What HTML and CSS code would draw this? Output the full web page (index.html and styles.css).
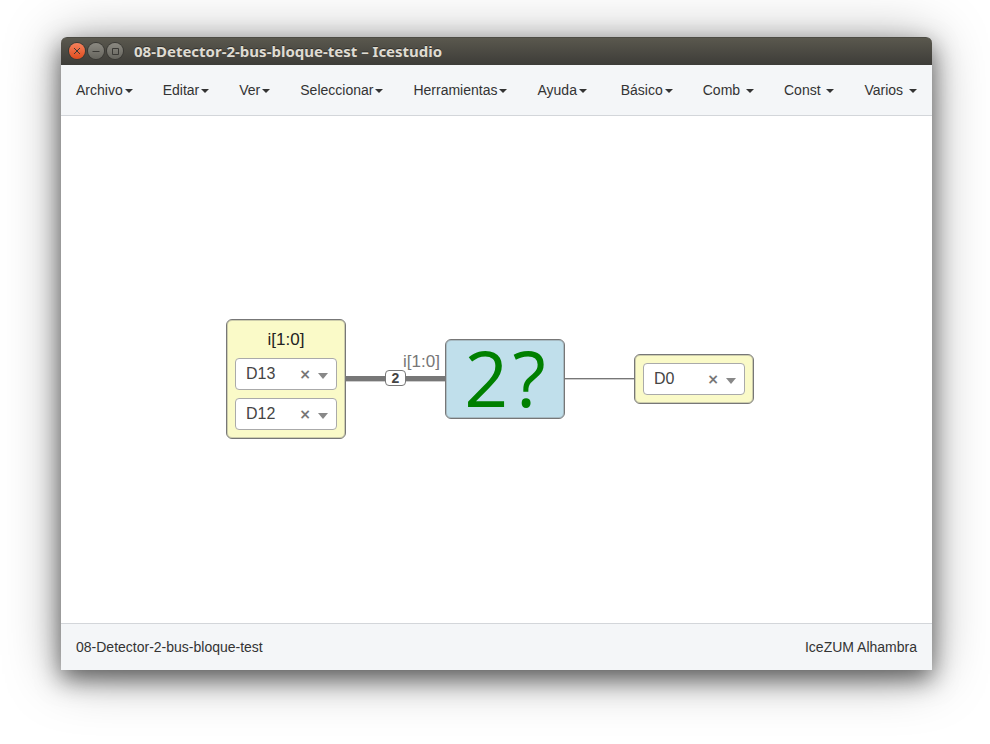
FILE: index.html
```html
<!DOCTYPE html>
<html lang="es">
<head>
<meta charset="utf-8">
<title>08-Detector-2-bus-bloque-test – Icestudio</title>
<link rel="stylesheet" href="styles.css">
</head>
<body>
<div class="window">
  <header class="titlebar">
    <button class="win-btn win-close" aria-label="Cerrar"><svg viewBox="0 0 16 16"><path d="M5 5l6 6M11 5l-6 6"/></svg></button>
    <button class="win-btn" aria-label="Minimizar"><svg viewBox="0 0 16 16"><path d="M4.500 8.500h7"/></svg></button>
    <button class="win-btn" aria-label="Maximizar"><svg viewBox="0 0 16 16"><path d="M5.500 5.500h6v6h-6z"/></svg></button>
    <h1 class="title">08-Detector-2-bus-bloque-test – Icestudio</h1>
  </header>
  <nav class="navbar">
    <div class="menu">
      <button>Archivo<i class="caret"></i></button>
      <button>Editar<i class="caret"></i></button>
      <button>Ver<i class="caret"></i></button>
      <button>Seleccionar<i class="caret"></i></button>
      <button>Herramientas<i class="caret"></i></button>
      <button>Ayuda<i class="caret"></i></button>
    </div>
    <div class="menu">
      <button>Básico<i class="caret"></i></button>
      <button>Comb <i class="caret"></i></button>
      <button>Const <i class="caret"></i></button>
      <button>Varios <i class="caret"></i></button>
    </div>
  </nav>
  <main class="canvas">
    <div class="wire bus"></div>
    <div class="wire single"></div>
    <span class="bus-size">2</span>
    <span class="port-label">i[1:0]</span>
    <section class="node node-input">
      <h2>i[1:0]</h2>
      <div class="pin">
        <select aria-label="Pin i[1]"><option>D13</option></select>
        <button class="clear" aria-label="Quitar">×</button>
        <i class="arrow"></i>
      </div>
      <div class="pin">
        <select aria-label="Pin i[0]"><option>D12</option></select>
        <button class="clear" aria-label="Quitar">×</button>
        <i class="arrow"></i>
      </div>
    </section>
    <section class="node node-block"><span>2</span><span>?</span></section>
    <section class="node node-output">
      <div class="pin">
        <select aria-label="Pin de salida"><option>D0</option></select>
        <button class="clear" aria-label="Quitar">×</button>
        <i class="arrow"></i>
      </div>
    </section>
  </main>
  <footer class="statusbar">
    <span>08-Detector-2-bus-bloque-test</span>
    <span>IceZUM Alhambra</span>
  </footer>
</div>
</body>
</html>
```
FILE: styles.css
```css
* { box-sizing: border-box; }
body {
  margin: 0;
  height: 100vh;
  padding: 37px 58px 74px 61px;
  background: #fff;
  color: #333;
  font: 14px/20px "Liberation Sans", Arial, sans-serif;
  overflow: hidden;
}
button {
  border: 0;
  padding: 0;
  background: none;
  color: inherit;
  font: inherit;
}
.window {
  height: 100%;
  display: flex;
  flex-direction: column;
  border-radius: 6px 6px 0 0;
  background: #fff;
  box-shadow: 0 9px 24px rgba(0, 0, 0, .55), 0 4px 56px rgba(0, 0, 0, .35);
}
.titlebar {
  height: 28px;
  display: flex;
  align-items: center;
  gap: 3px;
  padding: 0 7px 1px 8px;
  border-top: 1px solid #4c4b44;
  border-radius: 6px 6px 0 0;
  background: linear-gradient(#5a584e, #3d3c38);
}
.win-btn {
  width: 16px;
  height: 16px;
  border-radius: 50%;
  background: linear-gradient(#8b8981, #66655e);
  box-shadow: 0 0 0 1px #3a3935;
}
.win-close { background: linear-gradient(#f5815c, #de4c1e); }
.win-btn svg {
  display: block;
  fill: none;
  stroke: #3b3a36;
}
.title {
  margin: 0 0 0 8px;
  color: #dfdbd2;
  font: bold 15px/20px "Noto Sans", sans-serif;
  text-shadow: 0 -1px #33322e;
}
.navbar {
  height: 51px;
  display: flex;
  justify-content: space-between;
  border-bottom: 1px solid #d3d6da;
  background: #f4f6f8;
}
.menu { display: flex; }
.menu button {
  padding: 0 15px;
  white-space: pre;
}
.caret {
  display: inline-block;
  margin-left: 2px;
  vertical-align: middle;
  border: 4px solid transparent;
  border-top-color: #333;
  border-bottom: 0;
}
.canvas {
  position: relative;
  flex: 1;
  background: #fff;
}
.node {
  position: absolute;
  width: 120px;
  border: 1px solid #777;
  border-radius: 6px;
  box-shadow: inset 0 0 0 1px rgba(119, 119, 119, .35);
}
.node-input, .node-output {
  display: flex;
  flex-direction: column;
  gap: 8px;
  padding: 8px;
  background: #fafac8;
}
.node-input { left: 165px; top: 203px; }
.node-output { left: 573px; top: 238px; }
.node-block {
  left: 384px;
  top: 223px;
  height: 80px;
  display: flex;
  justify-content: center;
  align-items: center;
  gap: 4px;
  padding-bottom: 2px;
  background: #c0dfeb;
  color: #008000;
  font: 500 77px/78px "Open Sans", "Noto Sans", sans-serif;
}
.node h2 {
  margin: 0;
  color: #222;
  font-size: 17px;
  font-weight: normal;
  line-height: 24px;
  height: 22px;
  text-align: center;
}
.pin {
  height: 32px;
  display: flex;
  align-items: center;
  padding: 0 8px 0 10px;
  border: 1px solid #aaa;
  border-radius: 4px;
  background: #fff;
}
.pin select {
  flex: 1;
  min-width: 0;
  appearance: none;
  border: 0;
  padding: 0;
  background: none;
  color: #444;
  font: 16px/28px "Liberation Sans", Arial, sans-serif;
}
.clear {
  margin-right: 7px;
  color: #777;
  font: bold 14px/20px "DejaVu Sans", sans-serif;
}
.arrow {
  margin-top: 3px;
  border: 5px solid transparent;
  border-top: 6px solid #888;
  border-bottom: 0;
}
.wire { position: absolute; background: #777; }
.bus { left: 285px; top: 260px; width: 99px; height: 5px; box-shadow: 0 1px #ccc; }
.single { left: 504px; top: 262px; width: 69px; height: 1px; box-shadow: 0 1px #ccc; }
.bus-size {
  position: absolute;
  left: 324px;
  top: 254px;
  width: 21px;
  height: 16px;
  border: 1px solid #777;
  border-radius: 4px;
  background: #fff;
  color: #444;
  font-size: 14px;
  font-weight: bold;
  line-height: 14px;
  text-align: center;
}
.port-label {
  position: absolute;
  left: 342px;
  top: 236px;
  color: #777;
  font-size: 17px;
}
.statusbar {
  height: 47px;
  display: flex;
  justify-content: space-between;
  align-items: center;
  padding: 0 15px;
  border-top: 1px solid #d3d6da;
  background: #f4f6f8;
}
```
